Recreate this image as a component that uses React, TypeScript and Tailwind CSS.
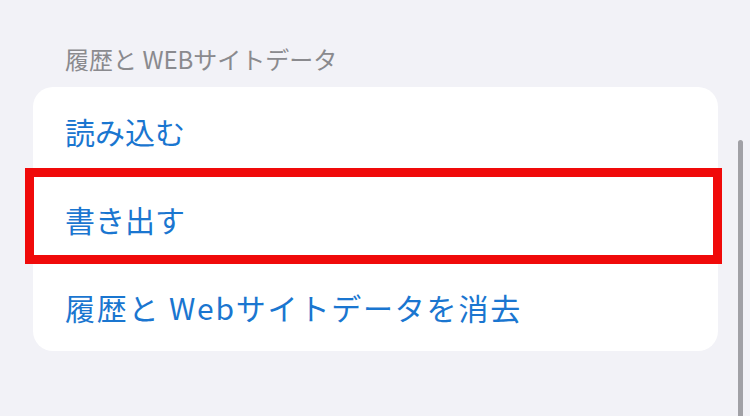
import React from 'react';

const rows = [
  { label: '読み込む', tracking: 'tracking-normal' },
  { label: '書き出す', tracking: 'tracking-normal' },
  { label: '履歴と Webサイトデータを消去', tracking: 'tracking-[1.8px]' },
];

export default function App() {
  return (
    <div
      className="relative w-[750px] h-[416px] overflow-hidden bg-[#f2f2f7]"
      style={{ fontFamily: '"Noto Sans CJK JP", "Noto Sans", sans-serif' }}
    >
      <div className="pl-[65px] pt-[44px] h-[87px] text-[24px] leading-[30px] text-[#8a8a8e]">
        履歴と WEBサイトデータ
      </div>

      <div className="relative ml-[33px] w-[685px] rounded-[20px] bg-white">
        {rows.map((r) => (
          <div key={r.label} className={`h-[88px] flex items-center pl-[32px] text-[30px] text-[#1a76d0] ${r.tracking}`}>
            {r.label}
          </div>
        ))}

        {/* annotation box */}
        <div className="absolute left-[-8px] top-[81px] w-[697px] h-[96px] border-[9px] border-[#f00a0a]" />
      </div>

      {/* scroll indicator */}
      <div className="absolute left-[738px] top-[140px] w-[5px] h-[290px] rounded-full bg-[#a1a1a6]" />
    </div>
  );
}
